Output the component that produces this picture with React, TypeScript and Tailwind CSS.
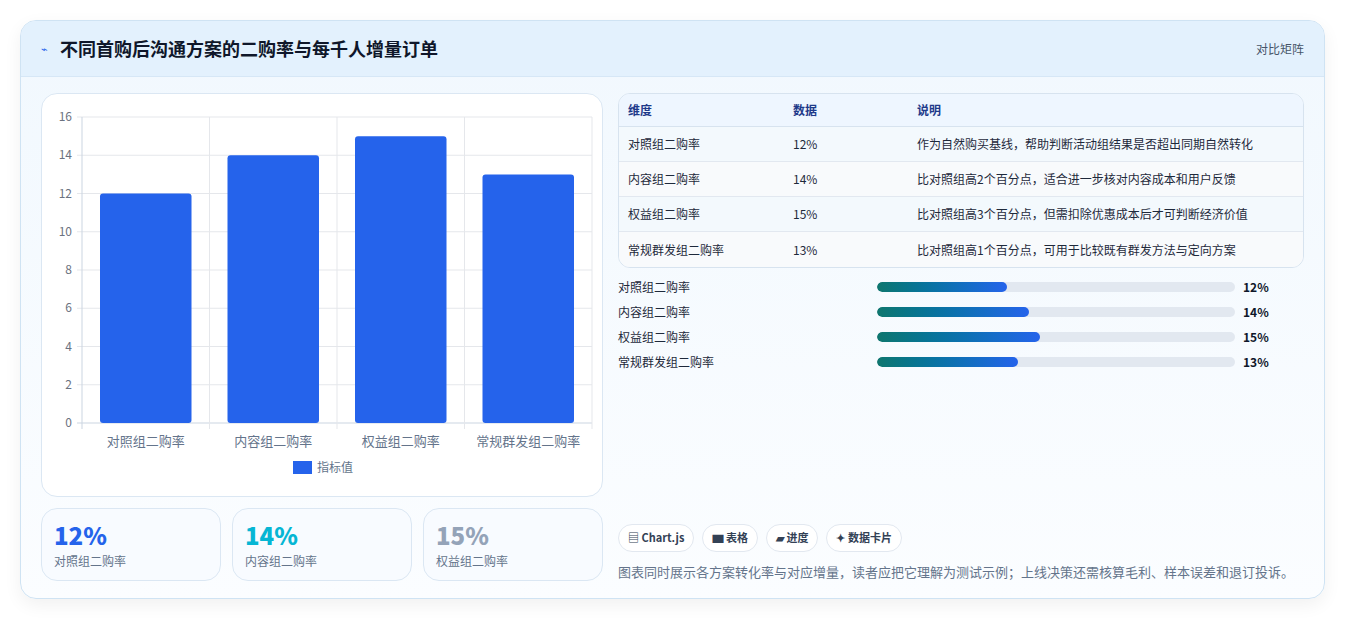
import React from "react";

const F = { fontFamily: '"Noto Sans CJK SC", "Noto Sans", sans-serif' };
const rows = [
  ["对照组二购率", "12%", "作为自然购买基线，帮助判断活动组结果是否超出同期自然转化", 12],
  ["内容组二购率", "14%", "比对照组高2个百分点，适合进一步核对内容成本和用户反馈", 14],
  ["权益组二购率", "15%", "比对照组高3个百分点，但需扣除优惠成本后才可判断经济价值", 15],
  ["常规群发组二购率", "13%", "比对照组高1个百分点，可用于比较既有群发方法与定向方案", 13],
] as const;

function Chart() {
  const x0 = 40, x1 = 550, y0 = 329, yTop = 23;
  const sy = (v: number) => y0 - ((y0 - yTop) * v) / 16;
  const cw = (x1 - x0) / 4;
  return (
    <svg width="562" height="404" className="block">
      {[0, 2, 4, 6, 8, 10, 12, 14, 16].map((v) => (
        <g key={v}>
          <line x1={x0 - 5} x2={x1} y1={sy(v)} y2={sy(v)} stroke={v === 0 ? "#cbd5e1" : "#e5e7eb"} />
          <text x={x0 - 10} y={sy(v) + 4} textAnchor="end" fontSize="12" fill="#6b7280" style={F}>{v}</text>
        </g>
      ))}
      {[0, 1, 2, 3, 4].map((i) => (
        <line key={i} x1={x0 + i * cw} x2={x0 + i * cw} y1={yTop} y2={y0 + 6} stroke={i === 0 ? "#cbd5e1" : "#e5e7eb"} />
      ))}
      {rows.map((r, i) => (
        <g key={i}>
          <rect x={x0 + i * cw + 18} y={sy(r[3])} width={cw - 36} height={y0 - sy(r[3])} rx="3" fill="#2563eb" />
          <text x={x0 + i * cw + cw / 2} y={y0 + 23} textAnchor="middle" fontSize="13" fill="#64748b" style={F}>{r[0]}</text>
        </g>
      ))}
      <rect x="251" y="367" width="19" height="13" fill="#2563eb" />
      <text x="275" y="378" fontSize="12" fill="#64748b" style={F}>指标值</text>
    </svg>
  );
}

export default function App() {
  return (
    <div style={F} className="min-h-[621px] bg-white pt-5 px-5 pb-5">
      <div className="rounded-2xl border border-[#cfe3f3] bg-gradient-to-b from-[#f1f8fe] to-[#fbfdff] shadow-[0_6px_18px_rgba(0,0,0,0.06)] overflow-hidden">
        <div className="h-[56px] flex items-center justify-between px-5 bg-[#e3f1fd] border-b border-[#d6e7f6]">
          <div className="flex items-center gap-3">
            <span className="text-[#2563eb] text-[11px]">⌁</span>
            <span className="text-[18px] font-bold text-[#0f172a]">不同首购后沟通方案的二购率与每千人增量订单</span>
          </div>
          <span className="text-[12px] text-[#475569]">对比矩阵</span>
        </div>
        <div className="flex gap-[15px] px-5 pt-4 pb-[17px]">
          <div className="w-[562px] flex flex-col gap-[11px]">
            <div className="h-[404px] rounded-2xl border border-[#dbe7f3] bg-white">
              <Chart />
            </div>
            <div className="flex gap-[11px]">
              {[["12%", "text-[#2563eb]", "对照组二购率"], ["14%", "text-[#06b6d4]", "内容组二购率"], ["15%", "text-[#94a3b8]", "权益组二购率"]].map(([v, c, l]) => (
                <div key={l} className="flex-1 h-[73px] rounded-2xl border border-[#dbe7f3] bg-[#f8fbff] px-3 pt-[11px]">
                  <div className={`text-[24px] font-extrabold leading-[30px] ${c}`}>{v}</div>
                  <div className="text-[12px] text-[#64748b] mt-[2px]">{l}</div>
                </div>
              ))}
            </div>
          </div>
          <div className="flex-1 flex flex-col">
            <div className="rounded-xl border border-[#d7e3ef] overflow-hidden bg-[#f8fbff]">
              <div className="h-[33px] flex items-center bg-[#eef6ff] border-b border-[#d7e3ef] text-[12px] font-semibold text-[#1e3a8a] px-[9px]">
                <span className="w-[165px]">维度</span><span className="w-[124px]">数据</span><span>说明</span>
              </div>
              {rows.map((r, i) => (
                <div key={i} className={`h-[35px] flex items-center px-[9px] text-[12px] text-[#1e293b] ${i < 3 ? "border-b border-[#e2e8f0]" : ""} ${i % 2 ? "bg-[#f8fafc]" : "bg-[#f3f9fd]"}`}>
                  <span className="w-[165px]">{r[0]}</span><span className="w-[124px]">{r[1]}</span><span>{r[2]}</span>
                </div>
              ))}
            </div>
            <div className="flex flex-col gap-[11px] mt-[12px]">
              {rows.map((r, i) => (
                <div key={i} className="flex items-center h-[14px] text-[12px]">
                  <span className="w-[259px] text-[#1e293b]">{r[0]}</span>
                  <div className="w-[358px] h-[10px] rounded-full bg-[#e2e8f0] overflow-hidden">
                    <div className="h-full rounded-full bg-gradient-to-r from-[#0f766e] to-[#2563eb]" style={{ width: `${(r[3] / 33) * 100}%` }} />
                  </div>
                  <span className="ml-2 font-bold text-[#0f172a]">{r[1]}</span>
                </div>
              ))}
            </div>
            <div className="mt-auto flex gap-2">
              {["▤ Chart.js", "▆ 表格", "▰ 进度", "✦ 数据卡片"].map((t) => (
                <span key={t} className="h-[28px] px-[9px] flex items-center rounded-full border border-[#e2e8f0] bg-white text-[11px] font-semibold text-[#334155]">{t}</span>
              ))}
            </div>
            <div className="mt-[10px] text-[13px] text-[#64748b]">图表同时展示各方案转化率与对应增量，读者应把它理解为测试示例；上线决策还需核算毛利、样本误差和退订投诉。</div>
          </div>
        </div>
      </div>
    </div>
  );
}
